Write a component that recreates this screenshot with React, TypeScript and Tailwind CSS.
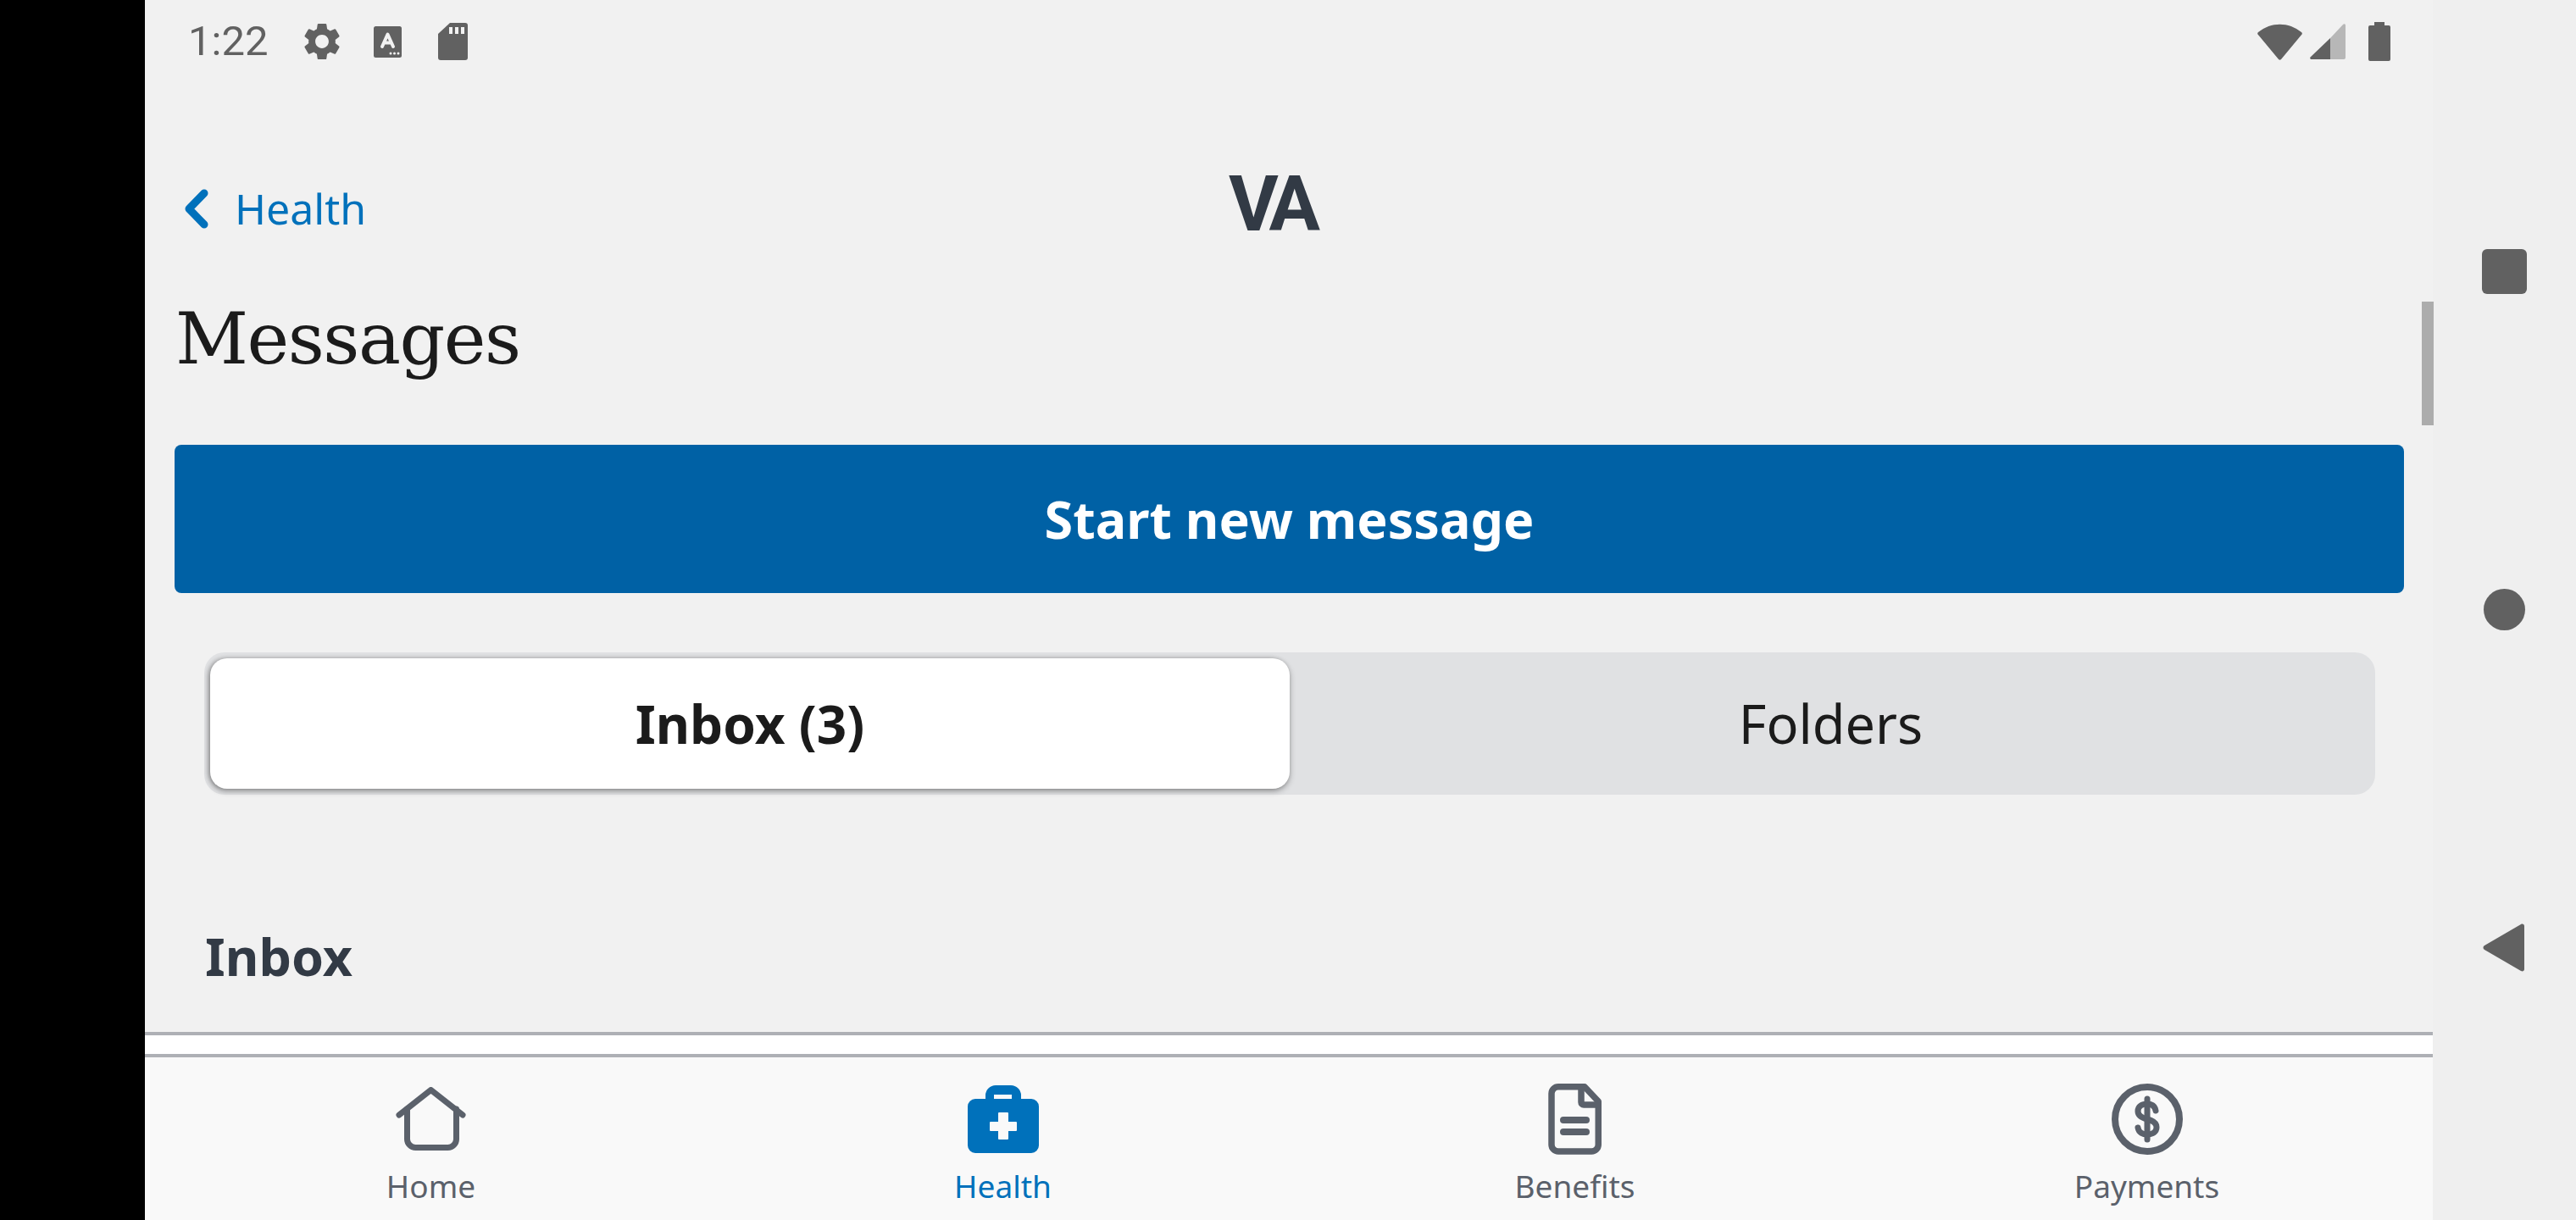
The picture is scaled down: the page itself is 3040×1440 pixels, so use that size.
import React from "react";

const SANS = "font-['Noto_Sans',sans-serif]";

function Gear() {
  return (
    <svg viewBox="2.5 2 19 20" className="h-[44px] w-[44px]" fill="#616161">
      <path d="M19.14 12.94c.04-.3.06-.61.06-.94 0-.32-.02-.64-.07-.94l2.03-1.58a.49.49 0 0 0 .12-.61l-1.92-3.32a.488.488 0 0 0-.59-.22l-2.39.96c-.5-.38-1.03-.7-1.62-.94l-.36-2.54a.484.484 0 0 0-.48-.41h-3.84c-.24 0-.43.17-.47.41l-.36 2.54c-.59.24-1.13.57-1.62.94l-2.39-.96c-.22-.08-.47 0-.59.22L2.74 8.87c-.12.21-.08.47.12.61l2.03 1.58c-.05.3-.09.63-.09.94s.02.64.07.94l-2.03 1.58a.49.49 0 0 0-.12.61l1.92 3.32c.12.22.37.29.59.22l2.39-.96c.5.38 1.03.7 1.62.94l.36 2.54c.05.24.24.41.48.41h3.84c.24 0 .44-.17.47-.41l.36-2.54c.59-.24 1.13-.56 1.62-.94l2.39.96c.22.08.47 0 .59-.22l1.92-3.32c.12-.22.07-.47-.12-.61l-2.01-1.58zM12 15.6c-1.98 0-3.6-1.62-3.6-3.6s1.62-3.6 3.6-3.6 3.6 1.62 3.6 3.6-1.62 3.6-3.6 3.6z" />
    </svg>
  );
}

function AutofillBadge() {
  return (
    <svg viewBox="0 0 33 37" className="h-[37px] w-[33px]">
      <rect width="33" height="37" rx="2.5" fill="#616161" />
      <path d="M10 24 L16.5 9.5 L23 24 M12.5 19.500 H20.500" stroke="#f1f1f1" strokeWidth="4" fill="none" strokeLinejoin="round" strokeLinecap="round" />
      <circle cx="20" cy="32" r="1.500" fill="#f1f1f1" />
      <circle cx="24.500" cy="32" r="1.500" fill="#f1f1f1" />
      <circle cx="29" cy="32" r="1.500" fill="#f1f1f1" />
    </svg>
  );
}

function SdCard() {
  return (
    <svg viewBox="0 0 35 44" className="h-[44px] w-[35px]">
      <path d="M14 0 H32 a3 3 0 0 1 3 3 V41 a3 3 0 0 1 -3 3 H3 a3 3 0 0 1 -3 -3 V13 Z" fill="#616161" />
      <path d="M13 5 H17 V13 H13 Z M20 5 H24 V13 H20 Z M27 5 H31 V13 H27 Z" fill="#f1f1f1" />
    </svg>
  );
}

function Wifi() {
  return (
    <svg viewBox="0 0 53 43" className="h-[43px] w-[53px]" fill="#616161">
      <path d="M1 10 C16 -2.5 37 -2.5 52 10 C53 11 53 12 52.5 12.5 L28 42 C27 43 26 43 25 42 L0.5 12.5 C0 12 0 11 1 10 Z" />
    </svg>
  );
}

function Signal() {
  return (
    <svg viewBox="0 0 42 42" className="h-[42px] w-[42px]">
      <path d="M24 17 L39 1 C40 0 42 0 42 2 V40 C42 41 41 42 40 42 H24 Z" fill="#b7b7b7" />
      <path d="M24 17 V42 H2 C0 42 -0.5 40 1 39 Z" fill="#616161" />
    </svg>
  );
}

function Battery() {
  return (
    <svg viewBox="0 0 26 46" className="h-[46px] w-[26px]" fill="#616161">
      <path d="M7 0 H19 V4 H24 a2 2 0 0 1 2 2 V44 a2 2 0 0 1 -2 2 H2 a2 2 0 0 1 -2 -2 V6 a2 2 0 0 1 2 -2 H7 Z" />
    </svg>
  );
}

function ChevronBack() {
  return (
    <svg viewBox="0 0 28 47" className="h-[47px] w-[28px]">
      <path d="M23 5 L5 23.5 L23 42" stroke="#0071bb" strokeWidth="9" strokeLinecap="round" strokeLinejoin="round" fill="none" />
    </svg>
  );
}

function HomeIcon() {
  return (
    <svg viewBox="0 0 84 76" className="h-[76px] w-[84px]" fill="none" stroke="#5b616b" strokeWidth="7" strokeLinejoin="round" strokeLinecap="round">
      <path d="M4 33 L41.500 3.500 L79 33" />
      <path d="M13.500 26 V61.500 a10 10 0 0 0 10 10 H61.500 a10 10 0 0 0 10 -10 V26" />
    </svg>
  );
}

function HealthIcon() {
  return (
    <svg viewBox="0 0 84 80" className="h-[80px] w-[84px]">
      <path
        fillRule="evenodd"
        fill="#0071bb"
        d="M21 16 V12 a12 12 0 0 1 12 -12 H51 a12 12 0 0 1 12 12 V16 H75 a9 9 0 0 1 9 9 V71 a9 9 0 0 1 -9 9 H9 a9 9 0 0 1 -9 -9 V25 a9 9 0 0 1 9 -9 Z M31 11 V16 H52 V11 Z"
      />
      <path d="M37 32 H47 Q48 32 48 33 V43 H57 Q58 43 58 44 V53 Q58 54 57 54 H48 V63 Q48 64 47 64 H37 Q36 64 36 63 V54 H27 Q26 54 26 53 V44 Q26 43 27 43 H36 V33 Q36 32 37 32 Z" fill="#f9f9f9" />
    </svg>
  );
}

function BenefitsIcon() {
  return (
    <svg viewBox="0 0 64 84" className="h-[84px] w-[64px]" fill="none" stroke="#5b616b" strokeWidth="7.500" strokeLinejoin="round">
      <path d="M12 3.750 H43 L59.250 21 V72 a8 8 0 0 1 -8 8 H12 a8 8 0 0 1 -8 -8 V11.750 a8 8 0 0 1 8 -8 Z" />
      <path d="M39 4 V22 a3 3 0 0 0 3 3 H59" />
      <path d="M18 43 H45 M18 57 H45" strokeWidth="8" strokeLinecap="round" />
    </svg>
  );
}

function PaymentsIcon() {
  return (
    <svg viewBox="0 0 84 84" className="h-[84px] w-[84px]" fill="none" stroke="#5b616b">
      <circle cx="42" cy="42" r="38" strokeWidth="8" />
      <path d="M52 32 C51 26 47 24 42 24 C36 24 31 27 31 32.500 C31 38 36 40.500 42 42 C48 43.500 53 46 53 51.500 C53 57 48 60 42 60 C37 60 32 58 31 52" strokeWidth="7" strokeLinecap="round" />
      <path d="M42 18 V66" strokeWidth="7" strokeLinecap="round" />
    </svg>
  );
}

function TabItem({ label, active, children }: { label: string; active?: boolean; children: React.ReactNode }) {
  return (
    <div className="flex flex-1 flex-col items-center pt-[31px]">
      <div className="flex h-[84px] items-center">{children}</div>
      <span className={`mt-[12px] text-[37px] leading-[50px] ${active ? "text-[#0071bb]" : "text-[#5b616b]"}`}>
        {label}
      </span>
    </div>
  );
}

export default function App() {
  return (
    <div className={`flex h-[1440px] w-[3040px] overflow-hidden bg-black ${SANS}`}>
      <div className="w-[171px] shrink-0 bg-black" />

      <main className="relative flex w-[2700px] shrink-0 flex-col bg-[#f1f1f1]">
        {/* status bar */}
        <div className="flex h-[98px] shrink-0 items-center justify-between pl-[51px] pr-[50px]">
          <div className="flex items-center">
            <span className="font-['Roboto',sans-serif] text-[49px] leading-[50px] text-[#616161]">1:22</span>
            <span className="ml-[42px]"><Gear /></span>
            <span className="ml-[39px]"><AutofillBadge /></span>
            <span className="ml-[43px]"><SdCard /></span>
          </div>
          <div className="flex items-center">
            <Wifi />
            <span className="ml-[9px]"><Signal /></span>
            <span className="ml-[27px]"><Battery /></span>
          </div>
        </div>

        {/* header */}
        <div className="relative mt-[98px] flex h-[100px] shrink-0 items-center pl-[47px]">
          <ChevronBack />
          <span className="ml-[31px] text-[50px] leading-[60px] text-[#0071bb]">Health</span>
          <span className="absolute left-[1279px] top-[1px] font-['Roboto',sans-serif] text-[90px] font-bold leading-[90px] tracking-[-8px] text-[#323a45]">
            VA
          </span>
        </div>

        <h1 className="mt-[54px] pl-[36px] font-['DejaVu_Serif',serif] text-[84px] leading-[100px] tracking-[-1.5px] text-[#1b1b1b]">
          Messages
        </h1>

        <div className="px-[35px] pt-[75px]">
          <button
            type="button"
            className="flex h-[175px] w-[2631px] items-center justify-center rounded-[8px] bg-[#0061a5] text-[61px] font-bold text-white"
          >
            Start new message
          </button>
        </div>

        {/* segmented control */}
        <div className="mx-[70px] mt-[70px] flex h-[168px] w-[2562px] rounded-[24px] bg-[#e0e1e3] p-[7px] pr-[0px]">
          <div className="flex w-[1274px] items-center justify-center rounded-[20px] bg-white text-[62px] font-bold text-[#1b1b1b] shadow-[-2px_0_5px_rgba(0,0,0,0.25),0_3px_7px_rgba(0,0,0,0.3)]">
            Inbox (3)
          </div>
          <div className="flex flex-1 items-center justify-center pr-[4px] text-[63px] text-[#1b1b1b]">Folders</div>
        </div>

        <h2 className="mt-[151px] pl-[71px] text-[61px] font-bold leading-[80px] text-[#323a45]">Inbox</h2>

        {/* tab bar */}
        <div className="absolute inset-x-0 bottom-0 flex h-[222px] flex-col">
          <div className="h-[30px] shrink-0 border-y-[4px] border-[#aeb0b5] bg-white" />
          <nav className="flex flex-1 bg-[#f9f9f9]">
            <TabItem label="Home"><HomeIcon /></TabItem>
            <TabItem label="Health" active><HealthIcon /></TabItem>
            <TabItem label="Benefits"><BenefitsIcon /></TabItem>
            <TabItem label="Payments"><PaymentsIcon /></TabItem>
          </nav>
        </div>

        {/* scroll indicator */}
        <div className="absolute right-[-1px] top-[356px] h-[146px] w-[14px] bg-[#acacac]" />
      </main>

      {/* android nav */}
      <aside className="flex flex-1 flex-col items-center bg-[#efefef] pt-[294px]">
        <div className="h-[53px] w-[53px] rounded-[6px] bg-[#616161]" />
        <div className="mt-[348px] h-[49px] w-[49px] rounded-full bg-[#616161]" />
        <svg viewBox="0 0 49 57" className="ml-[-3px] mt-[346px] h-[57px] w-[49px]" fill="#616161">
          <path d="M2 26 L45 1 C47 0 49 1 49 3 V54 C49 56 47 57 45 56 L2 31 C0 30 0 27 2 26 Z" />
        </svg>
      </aside>
    </div>
  );
}
